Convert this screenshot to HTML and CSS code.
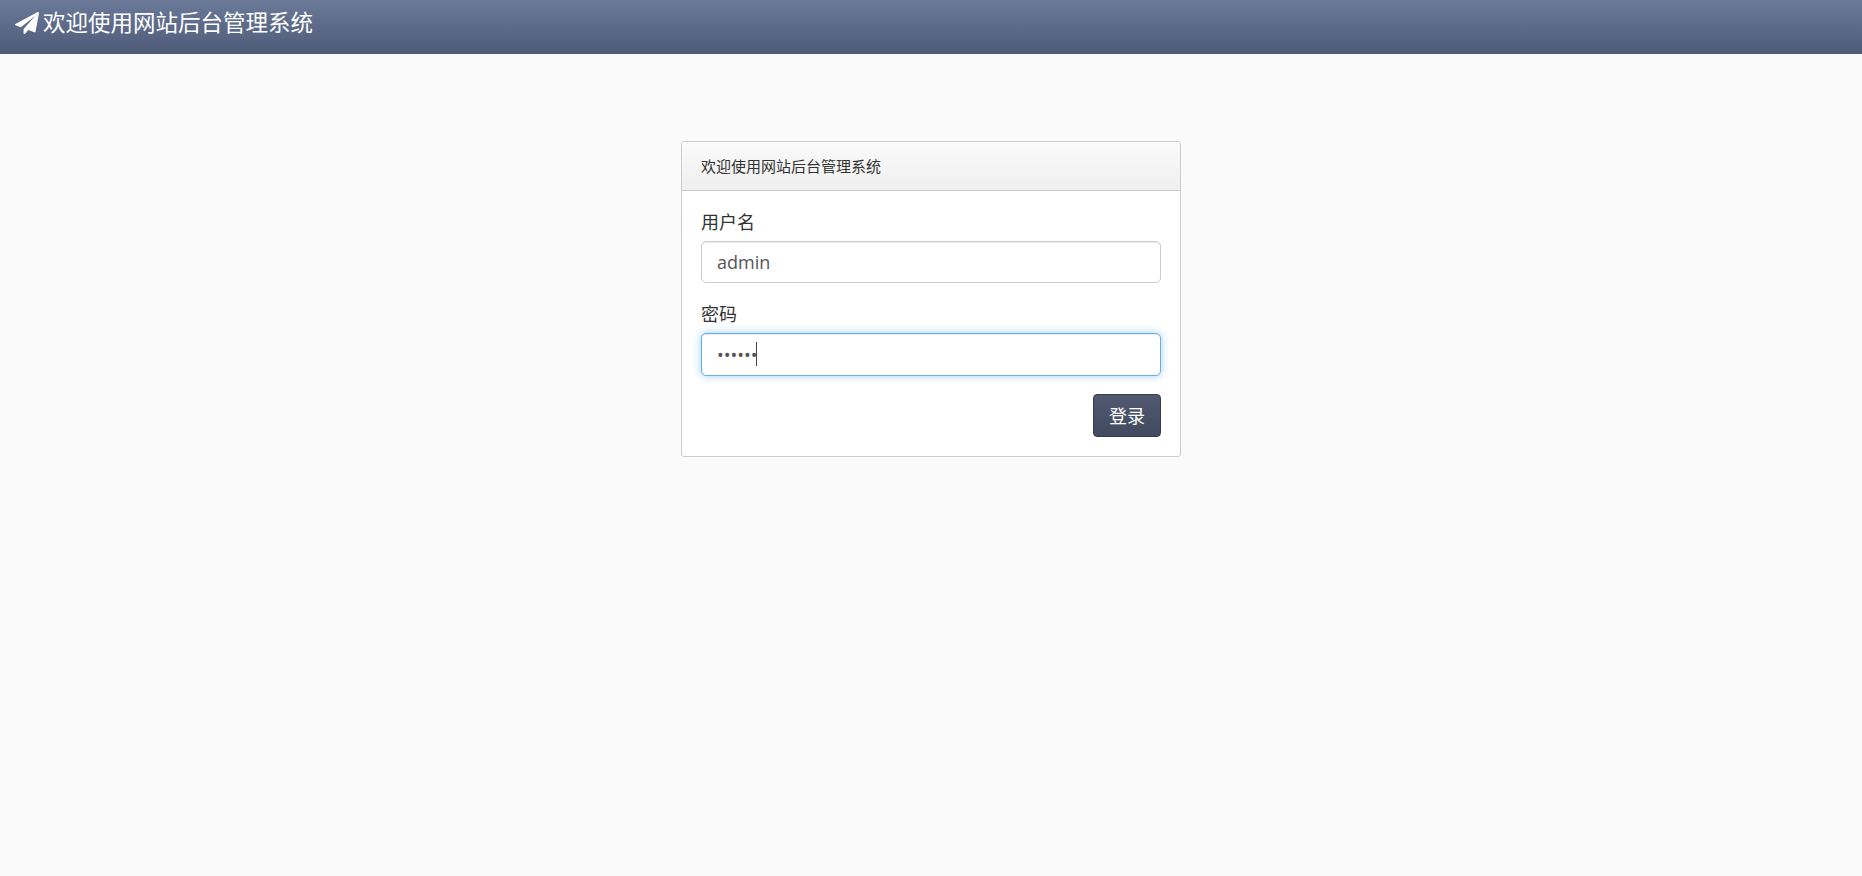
FILE: index.html
```html
<!DOCTYPE html>
<html lang="zh-CN">
<head>
<meta charset="utf-8">
<title>欢迎使用网站后台管理系统</title>
<link rel="stylesheet" href="styles.css">
</head>
<body>
<header class="navbar">
  <a class="brand" href="#">
    <svg class="brand-icon" viewBox="0 0 1792 1792" preserveAspectRatio="none" aria-hidden="true"><path d="M1764 11q33 24 27 64l-256 1536q-5 29-32 45-14 8-31 8-11 0-24-5l-453-185-242 295q-18 23-49 23-13 0-22-4-19-7-30.5-23.5t-11.5-36.5v-349l864-1059-1069 925-395-162q-37-14-40-55-2-40 32-59l1664-960q15-9 32-9 20 0 36 11z"/></svg>
    <span>欢迎使用网站后台管理系统</span>
  </a>
</header>
<main class="page">
  <section class="panel">
    <div class="panel-heading"><span class="panel-title">欢迎使用网站后台管理系统</span></div>
    <form class="panel-body">
      <div class="form-group">
        <label class="label" for="user">用户名</label>
        <input class="input" id="user" type="text" value="admin">
      </div>
      <div class="form-group">
        <label class="label" for="pass">密码</label>
        <div class="input-wrap">
          <input class="input input-focus" id="pass" type="password" value="123456">
          <span class="caret"></span>
        </div>
      </div>
      <div class="actions">
        <button class="btn" type="button">登录</button>
      </div>
    </form>
  </section>
</main>
</body>
</html>
```
FILE: styles.css
```css
* { box-sizing: border-box; }
html, body { height: 100%; }
body {
  margin: 0;
  background: #fafafa;
  color: #333;
  font-family: "Open Sans", "Noto Sans CJK SC", sans-serif;
  font-size: 18px;
  overflow: hidden;
}
.navbar {
  height: 54px;
  display: flex;
  align-items: center;
  padding: 0 15px;
  background: linear-gradient(to bottom, #6b7a99 0%, #4e5a78 100%);
}
.brand {
  display: flex;
  align-items: center;
  gap: 4px;
  color: #fff;
  text-decoration: none;
  font-size: 22.5px;
  line-height: 30px;
  margin-top: -8px;
}
.brand-icon { width: 24px; height: 22px; fill: #fff; flex: none; }
.page {
  display: flex;
  justify-content: center;
  padding-top: 87px;
}
.panel {
  width: 500px;
  height: 316px;
  background: #fff;
  border: 1px solid #ccc;
  border-radius: 3px;
}
.panel-heading {
  height: 49px;
  padding: 0 19px 2px;
  display: flex;
  align-items: center;
  font-size: 15px;
  background: linear-gradient(to bottom, #fafafa 0%, #efefef 100%);
  border-bottom: 1px solid #ccc;
  border-radius: 2px 2px 0 0;
}
.panel-body { padding: 19px 19px 0; }
.form-group { margin-bottom: 19px; }
.form-group + .form-group { margin-bottom: 18px; }
.label {
  display: block;
  font-size: 18px;
  line-height: 25px;
  margin-bottom: 6px;
}
.input-wrap { position: relative; }
.input {
  display: block;
  width: 100%;
  height: 42px;
  padding: 0 15px;
  font: inherit;
  color: #555;
  background: #fff;
  border: 1px solid #ccc;
  border-radius: 5px;
  box-shadow: inset 0 1px 1px rgba(0,0,0,.075);
  outline: none;
}
.input-focus {
  height: 43px;
  border-color: #66afe9;
  box-shadow: inset 0 1px 1px rgba(0,0,0,.075), 0 0 8px rgba(102,175,233,.6);
}
.caret {
  position: absolute;
  left: 55px;
  top: 9px;
  width: 1px;
  height: 24px;
  background: #444;
}
.actions { display: flex; justify-content: flex-end; }
.btn {
  width: 68px;
  height: 43px;
  padding: 0 0 2px;
  font: inherit;
  color: #fff;
  background: linear-gradient(to bottom, #50596f 0%, #414a5f 100%);
  border: 1px solid #353d4e;
  border-radius: 4px;
}
```
